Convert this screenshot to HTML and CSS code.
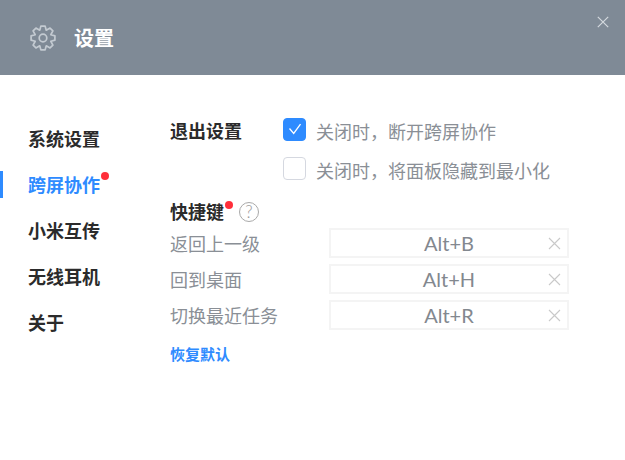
FILE: index.html
```html
<!DOCTYPE html>
<html lang="zh-CN">
<head>
<meta charset="utf-8">
<title>设置</title>
<link rel="stylesheet" href="styles.css">
</head>
<body>
<div class="window">
  <header class="titlebar">
    <svg class="gear" width="26" height="26" viewBox="0 0 26 26" fill="none" stroke="#c3cad1" stroke-width="1.700" stroke-linejoin="round">
      <path d="M10.860 1.100H15.140L16.250 5.200 20.050 3.100 22.900 5.950 20.800 9.750 24.900 10.860V15.140L20.800 16.250 22.900 20.050 20.050 22.900 16.250 20.800 15.140 24.900H10.860L9.750 20.800 5.950 22.900 3.100 20.050 5.200 16.250 1.100 15.140V10.860L5.200 9.750 3.100 5.950 5.950 3.100 9.750 5.200Z"/>
      <circle cx="13" cy="13" r="3.800"/>
    </svg>
    <h1 class="title">设置</h1>
    <svg class="close" width="12" height="12" viewBox="0 0 12 12" stroke="#d4d9de" stroke-width="1.2"><path d="M.8.8l10.400 10.400M11.200.8.800 11.200"/></svg>
  </header>
  <main class="body">
    <nav class="nav">
      <a class="nav-item">系统设置</a>
      <a class="nav-item active">跨屏协作<span class="dot nav-dot"></span></a>
      <a class="nav-item">小米互传</a>
      <a class="nav-item">无线耳机</a>
      <a class="nav-item">关于</a>
    </nav>
    <section class="content">
      <div class="exit">
        <h2 class="heading exit-heading">退出设置</h2>
        <div class="options">
          <label class="option"><span class="check checked"><svg width="14" height="12" viewBox="0 0 14 12" fill="none" stroke="#fff" stroke-width="1.300"><path d="M1.500 5.500l4.200 5L12.500 1.200"/></svg></span>关闭时，断开跨屏协作</label>
          <label class="option"><span class="check"></span>关闭时，将面板隐藏到最小化</label>
        </div>
      </div>
      <div class="shortcut-head">
        <h2 class="heading">快捷键<span class="dot key-dot"></span></h2>
        <span class="help">?</span>
      </div>
      <ul class="keys">
        <li class="key-row"><span class="key-label">返回上一级</span><span class="key-box"><span class="key-value">Alt+B</span><svg class="clear" width="13" height="13" viewBox="0 0 13 13" stroke="#c9c9c9" stroke-width="1.100"><path d="M1 1l11 11M12 1 1 12"/></svg></span></li>
        <li class="key-row"><span class="key-label">回到桌面</span><span class="key-box"><span class="key-value">Alt+H</span><svg class="clear" width="13" height="13" viewBox="0 0 13 13" stroke="#c9c9c9" stroke-width="1.100"><path d="M1 1l11 11M12 1 1 12"/></svg></span></li>
        <li class="key-row"><span class="key-label">切换最近任务</span><span class="key-box"><span class="key-value">Alt+R</span><svg class="clear" width="13" height="13" viewBox="0 0 13 13" stroke="#c9c9c9" stroke-width="1.100"><path d="M1 1l11 11M12 1 1 12"/></svg></span></li>
      </ul>
      <a class="reset">恢复默认</a>
    </section>
  </main>
</div>
</body>
</html>
```

FILE: styles.css
```css
* { box-sizing: border-box; }
html, body { margin: 0; padding: 0; background: #fff; }
body { font-family: Lato, "Noto Sans CJK SC", sans-serif; width: 625px; height: 460px; overflow: hidden; }
.titlebar { position: relative; height: 75px; background: #7f8a96; display: flex; align-items: center; padding-left: 30px; }
.gear { display: block; }
.title { margin: 0 0 0 18px; color: #fff; font-size: 20px; font-weight: 700; line-height: 26px; }
.close { position: absolute; top: 16px; right: 16px; }
.body { display: flex; }
.nav { width: 170px; padding-top: 41px; display: flex; flex-direction: column; }
.nav-item { position: relative; height: 46px; line-height: 46px; padding-left: 28px; font-size: 18px; font-weight: 700; color: #2b2b2b; }
.nav-item.active { color: #2e8bff; }
.nav-item.active::before { content: ""; position: absolute; left: 0; top: 9px; width: 3px; height: 27px; background: #2e8bff; }
.dot { position: absolute; width: 8px; height: 8px; border-radius: 50%; background: #ff2f3a; }
.nav-dot { left: 101px; top: 10px; }
.content { width: 400px; padding-top: 43px; }
.exit { display: flex; }
.heading { position: relative; margin: 0; font-size: 18px; font-weight: 700; color: #2b2b2b; line-height: 26px; }
.exit-heading { width: 113px; }
.options { display: flex; flex-direction: column; gap: 13px; }
.option { display: flex; align-items: center; height: 26px; font-size: 18px; color: #8a8f96; }
.check { width: 23px; height: 23px; margin-right: 10px; margin-bottom: 4px; border: 1.5px solid #d5d8e0; border-radius: 4px; background: #fff; display: flex; align-items: center; justify-content: center; }
.check.checked { background: #2e8bff; border-color: #2e8bff; }
.shortcut-head { display: flex; align-items: center; margin-top: 16px; height: 26px; }
.key-dot { left: 55px; top: 2px; }
.help { margin-left: 15px; width: 20px; height: 20px; border: 1px solid #a9a9a9; border-radius: 50%; color: #999; font-size: 17px; font-weight: 300; line-height: 18px; text-align: center; }
.keys { list-style: none; margin: 3px 0 0; padding: 0; display: flex; flex-direction: column; gap: 6px; }
.key-row { display: flex; align-items: center; height: 30px; }
.key-label { width: 159px; font-size: 18px; color: #8a8f96; }
.key-box { width: 240px; height: 30px; border: 2px solid #f4f4f4; display: flex; align-items: center; position: relative; }
.key-value { flex: 1; text-align: center; font-size: 20px; font-weight: 400; color: #83888f; }
.clear { position: absolute; right: 6px; top: 7px; }
.reset { display: block; margin-top: 14px; font-size: 15px; font-weight: 700; line-height: 20px; color: #2e8bff; }
```
